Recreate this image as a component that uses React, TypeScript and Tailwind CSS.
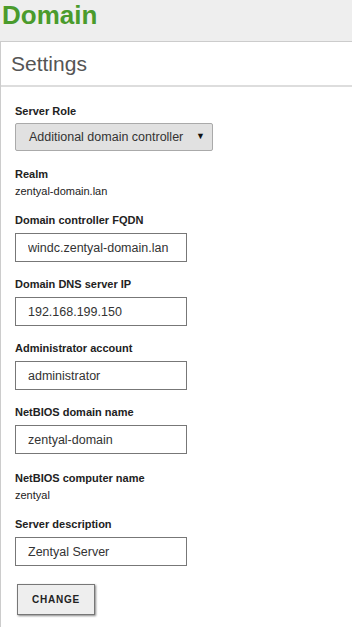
import { ReactNode } from 'react';

const font = { fontFamily: '"Liberation Sans", Arial, sans-serif' };

function Label({ children }: { children: ReactNode }) {
  return <div className="h-4 text-[11px] leading-4 font-bold text-[#222]">{children}</div>;
}

function TextField({ label, value }: { label: string; value: string }) {
  return (
    <div className="mb-[14px]">
      <Label>{label}</Label>
      <input
        readOnly
        value={value}
        className="mt-[5px] block h-[29px] w-[172px] border border-[#777] bg-white pl-3 text-[12.5px] text-[#333] outline-none"
      />
    </div>
  );
}

function StaticField({ label, value }: { label: string; value: string }) {
  return (
    <div className="mb-[13px]">
      <Label>{label}</Label>
      <div className="mt-px h-4 text-[11px] leading-4 text-[#222]">{value}</div>
    </div>
  );
}

export default function App() {
  return (
    <div className="min-h-screen bg-white" style={font}>
      <div className="h-[41px] bg-[#eeeeee] pl-[2px]">
        <h1 className="text-[26px] leading-[30px] font-bold text-[#4a9b2c]">Domain</h1>
      </div>

      <div className="border-t border-l border-[#cccccc]">
        <div className="flex h-[45px] items-center border-b-2 border-[#dddddd] pl-[10px]">
          <h2 className="text-[21px] text-[#555]">Settings</h2>
        </div>

        <div className="pt-4 pl-[14px] pb-3">
          <div className="mb-[15px]">
            <Label>Server Role</Label>
            <div className="mt-1 flex h-[28px] w-[198px] items-center justify-between rounded-[2px] border border-[#aaaaaa] bg-[#e1e1e1] pr-[7px] pl-[13px]">
              <span className="text-[12.5px] text-[#333]">Additional domain controller</span>
              <span className="text-[9px] text-[#111]">▼</span>
            </div>
          </div>

          <StaticField label="Realm" value="zentyal-domain.lan" />
          <TextField label="Domain controller FQDN" value="windc.zentyal-domain.lan" />
          <TextField label="Domain DNS server IP" value="192.168.199.150" />
          <TextField label="Administrator account" value="administrator" />
          <TextField label="NetBIOS domain name" value="zentyal-domain" />
          <div className="pt-[2px]">
            <StaticField label="NetBIOS computer name" value="zentyal" />
          </div>
          <TextField label="Server description" value="Zentyal Server" />

          <button className="mt-1 ml-[2px] h-[31px] w-[78px] border border-[#777] bg-[#eeeeee] text-[10px] font-bold tracking-[0.8px] text-[#222] shadow-[1px_1px_2px_#888]">
            CHANGE
          </button>
        </div>
      </div>
    </div>
  );
}
